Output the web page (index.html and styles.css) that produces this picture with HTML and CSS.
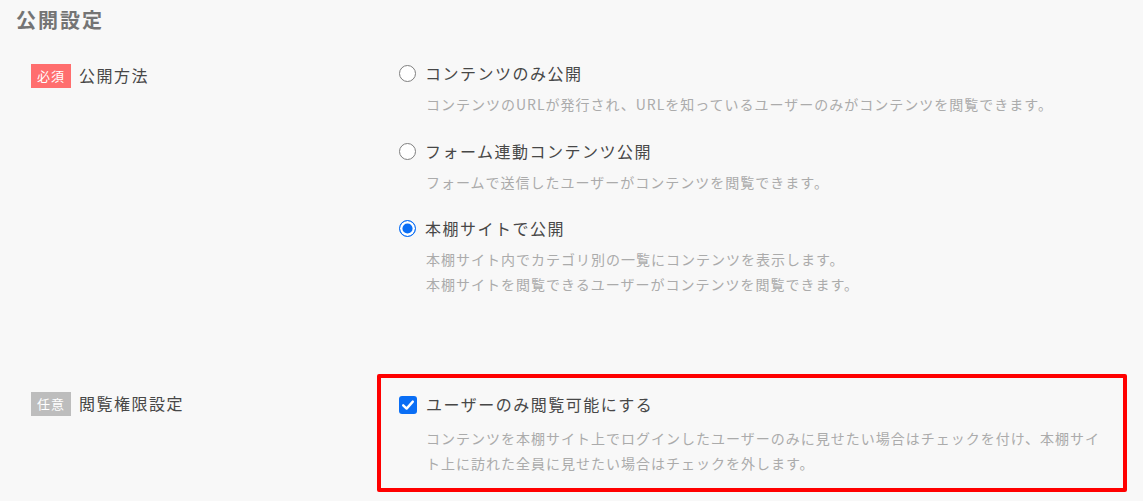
FILE: index.html
```html
<!DOCTYPE html>
<html lang="ja">
<head>
<meta charset="utf-8">
<title>公開設定</title>
<link rel="stylesheet" href="styles.css">
</head>
<body>
<main class="page">
  <h2 class="section-title">公開設定</h2>
  <div class="form">
    <div class="row row-method">
      <div class="label-col">
        <span class="badge badge-required">必須</span>
        <span class="label-text">公開方法</span>
      </div>
      <div class="field-col">
        <div class="options">
          <label class="option">
            <span class="option-head"><input type="radio" name="pub" class="radio"><span class="option-title">コンテンツのみ公開</span></span>
            <span class="option-desc">コンテンツのURLが発行され、URLを知っているユーザーのみがコンテンツを閲覧できます。</span>
          </label>
          <label class="option">
            <span class="option-head"><input type="radio" name="pub" class="radio"><span class="option-title">フォーム連動コンテンツ公開</span></span>
            <span class="option-desc">フォームで送信したユーザーがコンテンツを閲覧できます。</span>
          </label>
          <label class="option">
            <span class="option-head"><input type="radio" name="pub" class="radio" checked><span class="option-title">本棚サイトで公開</span></span>
            <span class="option-desc">本棚サイト内でカテゴリ別の一覧にコンテンツを表示します。<br>本棚サイトを閲覧できるユーザーがコンテンツを閲覧できます。</span>
          </label>
        </div>
      </div>
    </div>
    <div class="row row-access">
      <div class="label-col">
        <span class="badge badge-optional">任意</span>
        <span class="label-text">閲覧権限設定</span>
      </div>
      <div class="field-col">
        <div class="highlight-box">
          <label class="option check-option">
            <span class="option-head"><span class="checkbox"><svg viewBox="0 0 18 18" width="18" height="18"><path d="M4.2 9.3 L7.6 12.6 L13.8 5.6" fill="none" stroke="#fff" stroke-width="2.4" stroke-linecap="round" stroke-linejoin="round"/></svg></span><span class="option-title">ユーザーのみ閲覧可能にする</span></span>
            <span class="option-desc">コンテンツを本棚サイト上でログインしたユーザーのみに見せたい場合はチェックを付け、本棚サイト上に訪れた全員に見せたい場合はチェックを外します。</span>
          </label>
        </div>
      </div>
    </div>
  </div>
</main>
</body>
</html>
```
FILE: styles.css
```css
html, body {
  margin: 0;
  padding: 0;
  background: #f8f8f8;
}
body {
  font-family: "Noto Sans CJK JP", "Noto Sans", sans-serif;
  color: #474747;
  width: 1143px;
  height: 501px;
  overflow: hidden;
}
.page {
  padding: 6px 0 0 16px;
}
.section-title {
  margin: 0;
  font-size: 20px;
  line-height: 28px;
  font-weight: 700;
  letter-spacing: 2px;
  color: #747474;
}
.form {
  padding-left: 15px;
  margin-top: 27px;
}
.row {
  display: flex;
}
.row-access {
  margin-top: 77px;
}
.label-col {
  width: 346px;
  flex: none;
  display: flex;
  align-items: center;
  gap: 8px;
  align-self: flex-start;
}
.row-method .label-col {
  padding-top: 2px;
}
.row-access .label-col {
  padding-top: 17px;
}
.badge {
  display: inline-flex;
  align-items: center;
  justify-content: center;
  width: 40px;
  height: 24px;
  font-size: 13px;
  letter-spacing: 1px;
  color: #fff;
  line-height: 1;
}
.badge-required {
  background: #ff6e6e;
}
.badge-optional {
  background: #bdbdbd;
}
.label-text {
  font-size: 16px;
  line-height: 25px;
  letter-spacing: 1.5px;
  color: #474747;
}
.field-col {
  flex: none;
  width: 750px;
}
.options {
  display: flex;
  flex-direction: column;
  gap: 21.5px;
  padding-left: 22px;
}
.option {
  display: flex;
  flex-direction: column;
  gap: 6px;
}
.option-head {
  display: flex;
  align-items: center;
  gap: 9px;
  height: 25px;
}
.option-title {
  font-size: 16px;
  line-height: 25px;
  letter-spacing: 1.5px;
  color: #474747;
}
.option-desc {
  padding-left: 27px;
  font-size: 14px;
  line-height: 25px;
  letter-spacing: 1px;
  color: #ababab;
}
.radio {
  appearance: none;
  -webkit-appearance: none;
  margin: 0;
  width: 17px;
  height: 17px;
  border-radius: 50%;
  border: 1.8px solid #7f7f7f;
  background: #fff;
  box-sizing: border-box;
  flex: none;
}
.radio:checked {
  border-color: #0a6ef5;
  background: #0a6ef5;
  box-shadow: inset 0 0 0 2.4px #fff;
}
.highlight-box {
  box-sizing: border-box;
  width: 750px;
  height: 118px;
  border: 4px solid #ff0000;
  border-radius: 2px;
  padding: 14px 18px 0 18px;
}
.check-option {
  gap: 8.5px;
}
.checkbox {
  flex: none;
  width: 18px;
  height: 18px;
  border-radius: 3px;
  background: #0a6ef5;
  display: inline-flex;
}
.checkbox svg {
  display: block;
}
```
